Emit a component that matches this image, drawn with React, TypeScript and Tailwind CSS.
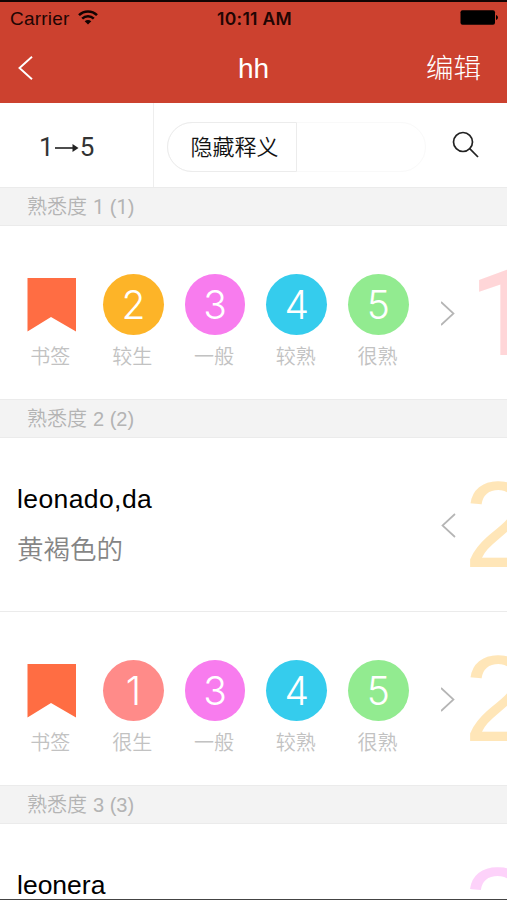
import React from "react";
import clsx from "clsx";

type Grade = { digit: string; label: string; color: string };

const grades: Record<string, Grade> = {
  one: { digit: "1", label: "很生", color: "bg-[#ff8b89]" },
  two: { digit: "2", label: "较生", color: "bg-[#fdb428]" },
  three: { digit: "3", label: "一般", color: "bg-[#f87cee]" },
  four: { digit: "4", label: "较熟", color: "bg-[#35cced]" },
  five: { digit: "5", label: "很熟", color: "bg-[#92eb90]" },
};

const cjk = "font-['Liberation_Sans','Noto_Sans_CJK_SC',sans-serif]";

const StatusBar = () => (
  <div className="flex h-[32px] items-center border-t-2 border-[#120403] pl-[10px] pr-[8px] pt-[3px] text-[19px] leading-none text-[#200503]">
    <div className="flex flex-1 items-center gap-[9px]">
      <span className="tracking-[0.2px]">Carrier</span>
      <svg width="20" height="15" viewBox="0 0 20 15" fill="none" stroke="#120302" strokeWidth="2.5" className="-mt-[3px]">
        <path d="M1 5.2C6 0.2 14 0.2 19 5.2" />
        <path d="M4.2 8.7C7.4 5.5 12.6 5.5 15.8 8.7" />
        <path d="M10 14.5L6.7 11.2C8.6 9.5 11.4 9.5 13.3 11.2Z" fill="#120302" stroke="none" />
      </svg>
    </div>
    <span className="font-['Inter',sans-serif] text-[17.5px] font-semibold tracking-[0.3px]">10:11 AM</span>
    <div className="flex flex-1 justify-end">
      <svg width="39" height="15" viewBox="0 0 39 15" className="-mt-[2px]">
        <rect x="0.5" y="0.3" width="34.5" height="14.4" rx="2" />
        <path d="M36 5C38.6 6 38.6 9 36 10Z" />
      </svg>
    </div>
  </div>
);

const NavBar = () => (
  <div className="flex h-[71px] items-center pl-[18px] pr-[26px] leading-none text-white">
    <div className="flex-1">
      <svg width="15" height="24" viewBox="0 0 15 24" fill="none" stroke="#fff" strokeWidth="1.9">
        <path d="M14 0.8L1.5 12L14 23.2" />
      </svg>
    </div>
    <span className="pl-[8px] pt-[2px] text-[28px]">hh</span>
    <div className="flex-1 pt-[3px] text-right text-[27.5px] font-light">编辑</div>
  </div>
);

const Toolbar = () => (
  <div className="flex h-[84px] shrink-0 items-center bg-white text-[#222]">
    <div className="flex h-full w-[154px] shrink-0 items-center border-r border-[#eee] pl-[39px] pt-[5px] font-['Roboto',sans-serif] text-[26px] text-[#333]">
      <span>1</span>
      <svg width="24" height="8" viewBox="0 0 24 8" className="mx-px" fill="#222">
        <rect y="3.2" width="19" height="1.6" />
        <path d="M17.5 0L23.5 4L17.5 8Z" />
      </svg>
      <span>5</span>
    </div>
    <div className="ml-[13px] mt-[4px] flex h-[50px] w-[259px] rounded-full border border-[#f9f9f9]">
      <div className="-m-px flex w-[130px] items-center justify-center rounded-l-full border border-[#ececec] pl-[5px] text-[22px] font-[350] text-[#111]">
        隐藏释义
      </div>
    </div>
    <svg width="27" height="27" viewBox="0 0 27 27" fill="none" stroke="#222" strokeWidth="1.7" className="-mt-[2px] ml-[26px]">
      <circle cx="11" cy="11" r="9.5" />
      <path d="M17.7 17.7L26 26" />
    </svg>
  </div>
);

const SectionHeader = ({ level }: { level: number }) => (
  <div className="flex h-[39px] shrink-0 items-center border-y border-[#ebebeb] bg-[#f3f3f3] pl-[27px] text-[20px] leading-none text-[#b4b4b4]">
    <span className="font-[350]">熟悉度</span>
    <span className="ml-[6px] whitespace-pre">
      <Digits text={`${level} (${level})`} />
    </span>
  </div>
);

// ones are set in Roboto, which draws them without a foot
const Digits = ({ text }: { text: string }) => (
  <>
    {text.split("").map((c, i) => (
      <span key={i} className={clsx(c === "1" && "font-['Roboto',sans-serif]")}>
        {c}
      </span>
    ))}
  </>
);

const Chevron = ({ left }: { left?: boolean }) => (
  <svg width="15" height="25" viewBox="0 0 15 25" fill="none" stroke="#b5b5b5" strokeWidth="1.7" className="mt-[2px] shrink-0">
    <path d={left ? "M14 1L1.5 12.5L14 24" : "M0 1L12.5 12.5L0 24"} />
  </svg>
);

const Watermark = ({ digit, className }: { digit: string; className: string }) => (
  <div className={clsx("shrink-0 text-[122px] leading-[122px]", className)}>{digit}</div>
);

const GradeRow = ({ items }: { items: Grade[] }) => (
  <div className="flex w-[441px] shrink-0 pl-[9px] pt-[16px]">
    <div className="flex w-[83.5px] flex-col items-center">
      <div className="flex h-[60.5px] items-center">
        <svg width="49" height="54" viewBox="0 0 49 54" fill="#ff6d43" className="ml-[2px]">
          <path d="M0.5 0H49V53.5L24 39L0.5 53.5Z" />
        </svg>
      </div>
      <span className="-ml-px mt-[12px] text-[20px] font-[350] leading-[20px] text-[#c2c2c2]">书签</span>
    </div>
    {items.map((g) => (
      <div key={g.label} className="flex w-[81.7px] flex-col items-center">
        <div
          className={clsx(
            "flex size-[60.5px] items-center justify-center rounded-full font-['Inter',sans-serif] text-[39px] font-light leading-none text-white",
            g.color
          )}
        >
          {g.digit}
        </div>
        <span className="-ml-[2px] mt-[12px] text-[20px] font-[350] leading-[20px] text-[#c2c2c2]">{g.label}</span>
      </div>
    ))}
  </div>
);

const Word = ({ word, meaning }: { word: React.ReactNode; meaning?: string }) => (
  <div className="w-[441px] shrink-0 pl-[17px]">
    <p className="text-[26.5px] leading-[32px] text-black">{word}</p>
    <p className="mt-[19px] h-[32px] text-[26.5px] font-[350] leading-[32px] text-[#858585]">{meaning}</p>
  </div>
);

const Row = ({ children, line }: { children: React.ReactNode; line?: boolean }) => (
  <div className={clsx("flex shrink-0 items-center overflow-hidden bg-white", line ? "h-[174px] border-b border-[#ebebeb]" : "h-[173px]")}>
    {children}
  </div>
);

export default function App() {
  const { one, two, three, four, five } = grades;

  return (
    <div className={clsx("flex h-[900px] w-[507px] flex-col overflow-hidden border-b border-[#444] bg-white", cjk)}>
      <header className="h-[103px] shrink-0 bg-[#cc412f]">
        <StatusBar />
        <NavBar />
      </header>
      <Toolbar />

      <SectionHeader level={1} />
      <Row>
        <GradeRow items={[two, three, four, five]} />
        <Chevron />
        <Watermark digit="1" className="ml-[13px] mt-[2px] font-['Roboto',sans-serif] font-medium text-[#ffd6d8]" />
      </Row>

      <SectionHeader level={2} />
      <Row line>
        <Word word={<span className="tracking-[0.4px]">leonado,da</span>} meaning="黄褐色的" />
        <Chevron left />
        <Watermark digit="2" className="ml-[8px] text-[#ffe6b8]" />
      </Row>
      <Row>
        <GradeRow items={[one, three, four, five]} />
        <Chevron />
        <Watermark digit="2" className="ml-[8px] text-[#ffe6b8]" />
      </Row>

      <SectionHeader level={3} />
      <Row>
        <Word word="leonera" />
        <Chevron left />
        <Watermark digit="3" className="ml-[8px] text-[#fdd2fa]" />
      </Row>
    </div>
  );
}
